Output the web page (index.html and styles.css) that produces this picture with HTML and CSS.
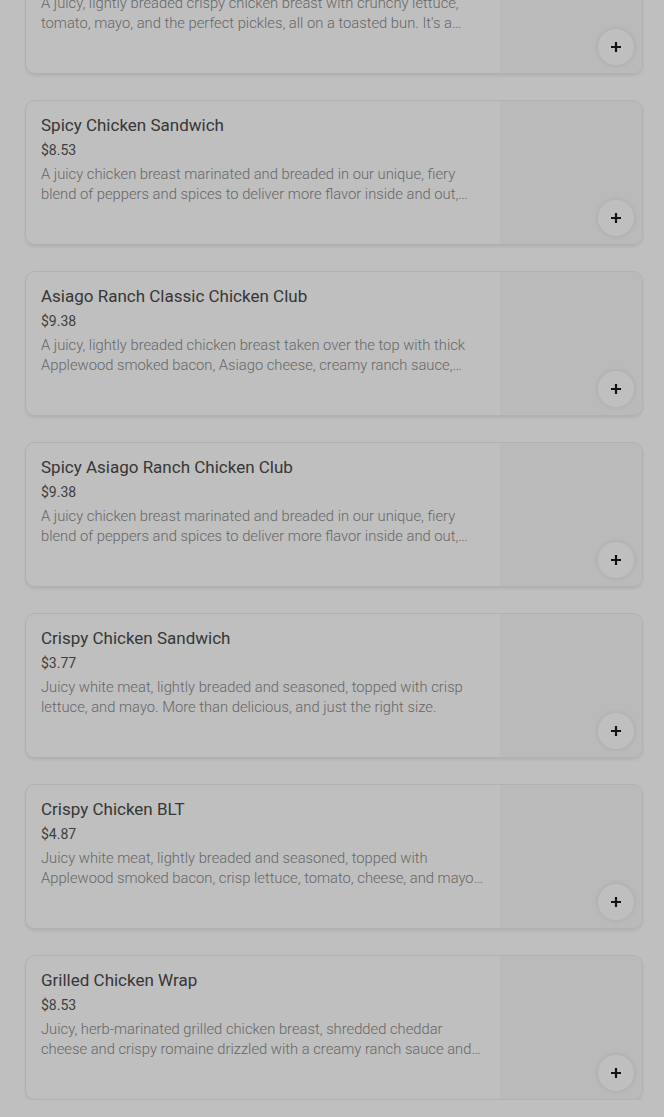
FILE: index.html
```html
<!DOCTYPE html>
<html lang="en">
<head>
    <meta charset="UTF-8">
    <meta name="viewport" content="width=device-width, initial-scale=1.0">
    <title>Menu</title>
    <link rel="stylesheet" href="styles.css">
</head>
<body>
    <div class="menu-list">
        <div class="menu-item">
            <div class="item-info">
                <h3 class="item-name">Classic Chicken Sandwich</h3>
                <div class="item-price">$6.19</div>
                <p class="item-desc">A juicy, lightly breaded crispy chicken breast with crunchy lettuce, tomato, mayo, and the perfect pickles, all on a toasted bun. It's a classic for a reason.</p>
            </div>
            <div class="item-image"><button class="btn-add"><svg viewBox="0 0 12 12"><path d="M6 1v10M1 6h10"/></svg></button></div>
        </div>
        <div class="menu-item">
            <div class="item-info">
                <h3 class="item-name">Spicy Chicken Sandwich</h3>
                <div class="item-price">$8.53</div>
                <p class="item-desc">A juicy chicken breast marinated and breaded in our unique, fiery blend of peppers and spices to deliver more flavor inside and out, served on a toasted bun.</p>
            </div>
            <div class="item-image"><button class="btn-add"><svg viewBox="0 0 12 12"><path d="M6 1v10M1 6h10"/></svg></button></div>
        </div>
        <div class="menu-item">
            <div class="item-info">
                <h3 class="item-name">Asiago Ranch Classic Chicken Club</h3>
                <div class="item-price">$9.38</div>
                <p class="item-desc">A juicy, lightly breaded chicken breast taken over the top with thick Applewood smoked bacon, Asiago cheese, creamy ranch sauce, lettuce and tomato.</p>
            </div>
            <div class="item-image"><button class="btn-add"><svg viewBox="0 0 12 12"><path d="M6 1v10M1 6h10"/></svg></button></div>
        </div>
        <div class="menu-item">
            <div class="item-info">
                <h3 class="item-name">Spicy Asiago Ranch Chicken Club</h3>
                <div class="item-price">$9.38</div>
                <p class="item-desc">A juicy chicken breast marinated and breaded in our unique, fiery blend of peppers and spices to deliver more flavor inside and out, topped with bacon and Asiago.</p>
            </div>
            <div class="item-image"><button class="btn-add"><svg viewBox="0 0 12 12"><path d="M6 1v10M1 6h10"/></svg></button></div>
        </div>
        <div class="menu-item">
            <div class="item-info">
                <h3 class="item-name">Crispy Chicken Sandwich</h3>
                <div class="item-price">$3.77</div>
                <p class="item-desc">Juicy white meat, lightly breaded and seasoned, topped with crisp lettuce, and mayo. More than delicious, and just the right size.</p>
            </div>
            <div class="item-image"><button class="btn-add"><svg viewBox="0 0 12 12"><path d="M6 1v10M1 6h10"/></svg></button></div>
        </div>
        <div class="menu-item">
            <div class="item-info">
                <h3 class="item-name">Crispy Chicken BLT</h3>
                <div class="item-price">$4.87</div>
                <p class="item-desc">Juicy white meat, lightly breaded and seasoned, topped with Applewood smoked bacon, crisp lettuce, tomato, cheese, and mayo on a toasted bun.</p>
            </div>
            <div class="item-image"><button class="btn-add"><svg viewBox="0 0 12 12"><path d="M6 1v10M1 6h10"/></svg></button></div>
        </div>
        <div class="menu-item">
            <div class="item-info">
                <h3 class="item-name">Grilled Chicken Wrap</h3>
                <div class="item-price">$8.53</div>
                <p class="item-desc">Juicy, herb-marinated grilled chicken breast, shredded cheddar cheese and crispy romaine drizzled with a creamy ranch sauce and wrapped in a warm tortilla.</p>
            </div>
            <div class="item-image"><button class="btn-add"><svg viewBox="0 0 12 12"><path d="M6 1v10M1 6h10"/></svg></button></div>
        </div>
    </div>
    <div class="backdrop"></div>
</body>
</html>
```

FILE: styles.css
```css
body {
    margin: 0;
    padding: 0;
    font-family: Roboto, "Liberation Sans", sans-serif;
    background-color: #ffffff;
    color: #000;
}
.menu-list {
    display: flex;
    flex-direction: column;
    gap: 26px;
    padding: 0 21px 0 25px;
    margin-top: -71px;
}
.menu-item {
    display: flex;
    height: 145px;
    border: 1px solid #ececec;
    border-radius: 10px;
    box-shadow: 0 2px 3px rgba(0, 0, 0, 0.08);
    overflow: hidden;
    box-sizing: border-box;
}
.item-info {
    flex: 1;
    padding: 12px 16px 0 15px;
    min-width: 0;
}
.item-name {
    margin: 0;
    font-size: 17px;
    line-height: 24px;
    font-weight: 400;
    color: #4a4a4a;
}
.item-price {
    margin-top: 3px;
    font-size: 14px;
    line-height: 20px;
    color: #555;
}
.item-desc {
    margin: 4px 0 0 0;
    font-size: 14.75px;
    line-height: 20px;
    font-weight: 300;
    color: #8a8a8a;
    display: -webkit-box;
    -webkit-line-clamp: 2;
    -webkit-box-orient: vertical;
    overflow: hidden;
}
.item-image {
    position: relative;
    width: 142px;
    background-color: #f9f9f9;
    flex-shrink: 0;
}
.btn-add {
    position: absolute;
    right: 8px;
    bottom: 8px;
    width: 36px;
    height: 36px;
    border: none;
    border-radius: 50%;
    background-color: #fff;
    padding: 0;
    display: flex;
    align-items: center;
    justify-content: center;
    box-shadow: 0 0 6px rgba(0, 0, 0, 0.1);
    cursor: pointer;
}
.btn-add svg {
    width: 12px;
    height: 12px;
    stroke: #1a1a1a;
    stroke-width: 2.2;
    fill: none;
}
.backdrop {
    position: fixed;
    inset: 0;
    background-color: rgba(0, 0, 0, 0.25);
}
```
